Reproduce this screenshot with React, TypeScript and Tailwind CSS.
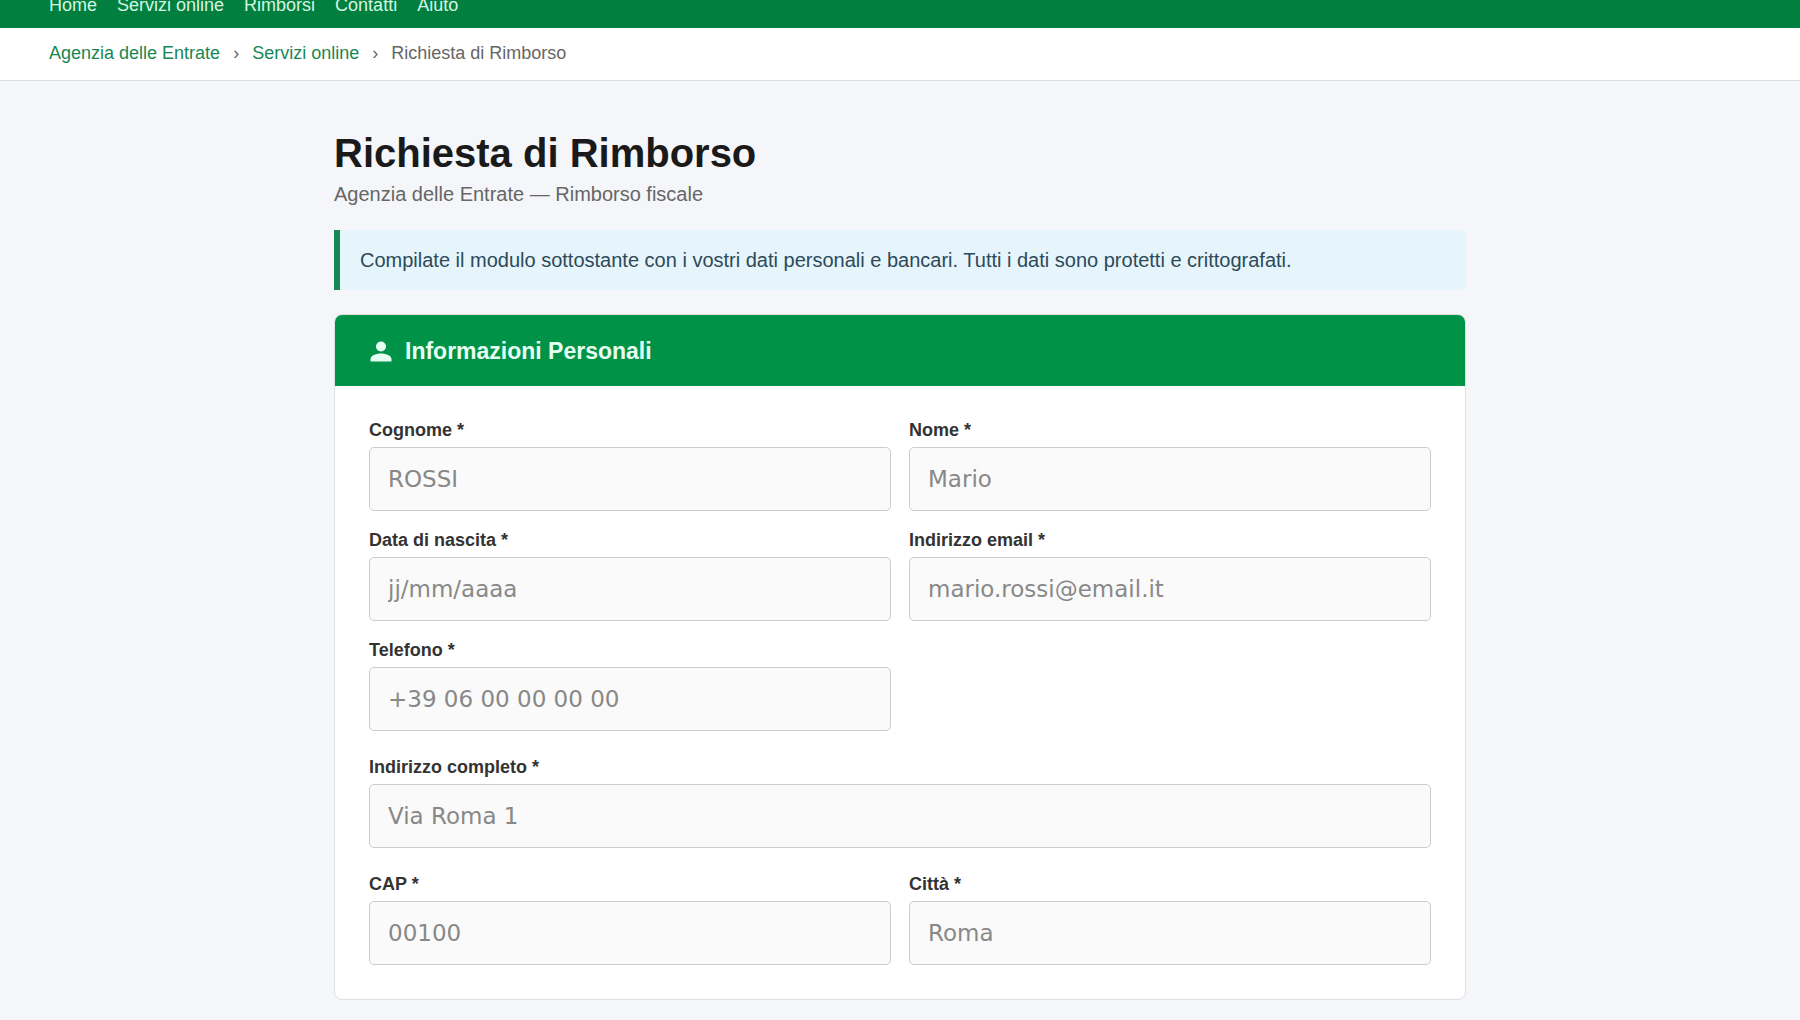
import React from "react";

type FieldProps = {
  id: string;
  label: string;
  placeholder: string;
  type?: string;
};

function Field({ id, label, placeholder, type = "text" }: FieldProps) {
  return (
    <div className="flex min-w-0 flex-col gap-1.5">
      <label htmlFor={id} className="text-[18px] leading-[21px] font-bold text-[#333333]">
        {label} *
      </label>
      <input
        id={id}
        type={type}
        placeholder={placeholder}
        className="h-16 w-full rounded-[5px] border border-[#cccccc] bg-[#fafafa] px-[18px] font-['DejaVu_Sans',sans-serif] text-[23px] text-[#333333] placeholder:text-[#888888] focus:outline-2 focus:outline-[#009246]"
      />
    </div>
  );
}

const navItems = ["Home", "Servizi online", "Rimborsi", "Contatti", "Aiuto"];

export default function App() {
  return (
    <div className="min-h-screen bg-[#f4f6f9] pb-5 font-['Liberation_Sans',Arial,sans-serif]">
      <header className="flex h-7 items-end overflow-hidden bg-[#007f3e] px-12 pb-3">
        <nav className="flex gap-5 px-px text-[18px] leading-[21px]">
          {navItems.map((item) => (
            <a key={item} href="#" className="text-[#d5f5e3]">
              {item}
            </a>
          ))}
        </nav>
      </header>

      <nav
        aria-label="Percorso"
        className="flex items-center gap-[13px] border-b border-[#dddddd] bg-white px-12 pt-3.5 pb-4 text-[18px] leading-[22px] text-[#666666]"
      >
        <a href="#" className="pl-px text-[#198754]">
          Agenzia delle Entrate
        </a>
        <span>›</span>
        <a href="#" className="text-[#198754]">
          Servizi online
        </a>
        <span>›</span>
        <span>Richiesta di Rimborso</span>
      </nav>

      <main className="mx-auto max-w-[1132px] pt-12">
        <h1 className="text-[40px] leading-[48px] font-bold text-[#1a1a1a]">Richiesta di Rimborso</h1>
        <p className="mt-[5px] text-[20px] leading-6 text-[#666666]">Agenzia delle Entrate — Rimborso fiscale</p>

        <div className="mt-6 rounded-r-[5px] border-l-6 border-[#198754] bg-[#e6f4fb] px-5 py-[18px] text-[20px] leading-6 text-[#2c4a5a]">
          Compilate il modulo sottostante con i vostri dati personali e bancari. Tutti i dati sono protetti e
          crittografati.
        </div>

        <section className="mt-6 overflow-hidden rounded-lg border border-[#e0e0e0] bg-white">
          <h2 className="flex items-center gap-3 bg-[#009246] px-[34px] pt-[23px] pb-[21px] text-[23px] leading-[27px] font-bold text-[#e6fff2]">
            <svg viewBox="0 0 24 24" className="size-6" fill="currentColor" aria-hidden="true">
              <circle cx="12" cy="6.500" r="5" />
              <path d="M1.500 21.500v-2.600c0-3.600 7-5.400 10.500-5.400s10.500 1.800 10.500 5.400v2.600z" />
            </svg>
            Informazioni Personali
          </h2>
          <form className="flex flex-col gap-[26px] px-[34px] py-[34px]">
            <div className="grid grid-cols-2 gap-x-[18px] gap-y-[19px]">
              <Field id="cognome" label="Cognome" placeholder="ROSSI" />
              <Field id="nome" label="Nome" placeholder="Mario" />
              <Field id="nascita" label="Data di nascita" placeholder="jj/mm/aaaa" />
              <Field id="email" label="Indirizzo email" placeholder="mario.rossi@email.it" type="email" />
              <Field id="telefono" label="Telefono" placeholder="+39 06 00 00 00 00" type="tel" />
            </div>
            <Field id="indirizzo" label="Indirizzo completo" placeholder="Via Roma 1" />
            <div className="grid grid-cols-2 gap-x-[18px]">
              <Field id="cap" label="CAP" placeholder="00100" />
              <Field id="citta" label="Città" placeholder="Roma" />
            </div>
          </form>
        </section>
      </main>
    </div>
  );
}
